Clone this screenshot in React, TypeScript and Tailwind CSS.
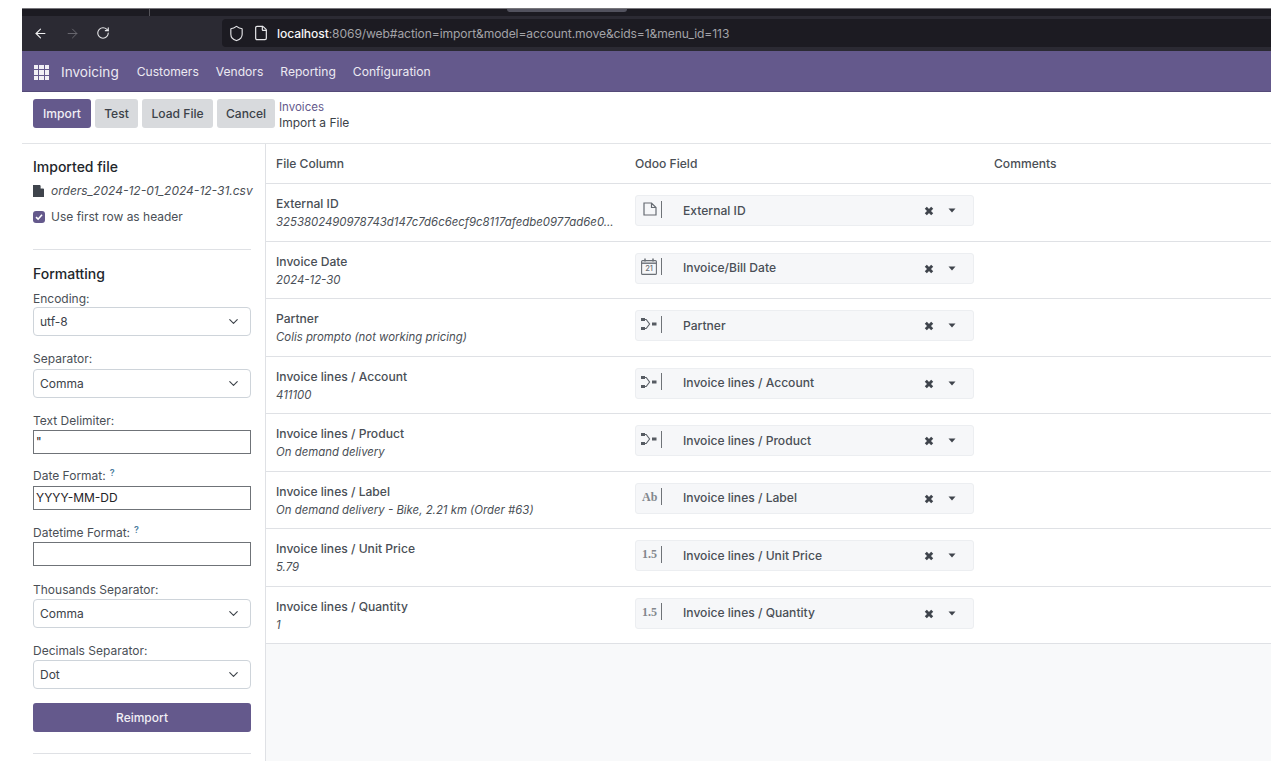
import React from "react";
import { ArrowLeft, ArrowRight, RotateCw, Shield, File, ChevronDown } from "lucide-react";

const font = { fontFamily: "Inter, 'Liberation Sans', sans-serif" };

function Chrome() {
  return (
    <div className="h-[43px] bg-[#1c1b22] border-t border-[#77767b] flex flex-col">
      <div className="h-[7px] bg-[#1c1b22] relative shrink-0">
        <div className="absolute left-[127px] top-0 w-px h-[7px] bg-[#55545a]" />
        <div className="absolute left-[485px] top-0 w-[120px] h-[3px] bg-[#52525e] rounded-b" />
      </div>
      <div className="h-[3px] bg-[#2b2a33] shrink-0" />
      <div className="flex-1 bg-[#2b2a33] flex items-center">
        <div className="flex items-center w-[200px] h-full pl-[11px]">
          <ArrowLeft size={15} strokeWidth={1.8} className="text-[#f0f0f2]" />
          <ArrowRight size={15} strokeWidth={1.5} className="text-[#6c6b72] ml-[17px]" />
          <RotateCw size={14} strokeWidth={1.9} className="text-[#e6e6e9] ml-[16px]" />
        </div>
        <div className="flex-1 h-[28px] bg-[#1c1b22] rounded-l flex items-center pl-[6px] text-[12.1px] tracking-[-0.1px]">
          <Shield size={17} strokeWidth={1.6} className="text-[#e6e6e9]" />
          <File size={16} strokeWidth={1.8} className="text-[#e6e6e9] ml-[8px]" />
          <span className="ml-[8px] mt-[2px] text-[#f4f4f5] font-medium">localhost</span>
          <span className="mt-[2px] text-[#a3a3a8]">:8069/web#action=import&amp;model=account.move&amp;cids=1&amp;menu_id=113</span>
        </div>
      </div>
      <div className="h-[4px] bg-[#2b2a33] shrink-0" />
    </div>
  );
}

function AppsIcon() {
  return (
    <div className="grid grid-cols-3 gap-px w-[15px] h-[15px]">
      {Array.from({ length: 9 }).map((_, i) => (
        <div key={i} className="bg-[#f1eff5]" />
      ))}
    </div>
  );
}

function Nav() {
  return (
    <div className="h-[41px] bg-[#64598c] border-b border-[#544a78] flex items-center text-[#ece9f2] text-[12.1px] pl-[12px] pt-[3px]">
      <AppsIcon />
      <span className="ml-[12px] text-[13.6px]">Invoicing</span>
      <span className="ml-[18px]">Customers</span>
      <span className="ml-[17px]">Vendors</span>
      <span className="ml-[17px]">Reporting</span>
      <span className="ml-[17px]">Configuration</span>
    </div>
  );
}

function Toolbar() {
  const btn = "h-[29px] rounded-[3px] text-[12.1px] font-medium flex items-center justify-center pt-[2px]";
  const grey = "bg-[#d8dadd] text-[#3c4249]";
  return (
    <div className="h-[52px] border-b border-[#e2e4e7] bg-white flex pl-[11px] pt-[7px]">
      <button className={`${btn} w-[58px] bg-[#64598c] text-[#f1eff5]`}>Import</button>
      <button className={`${btn} ${grey} w-[43px] ml-[4px]`}>Test</button>
      <button className={`${btn} ${grey} w-[71px] ml-[4px]`}>Load File</button>
      <button className={`${btn} ${grey} w-[58px] ml-[4px]`}>Cancel</button>
      <div className="ml-[4px] text-[12px] leading-[15px] pt-[0.5px]">
        <div className="text-[#64598c] text-[11.5px]">Invoices</div>
        <div className="text-[#3c4249]">Import a File</div>
      </div>
    </div>
  );
}

function FieldLabel({ children, help }: { children: React.ReactNode; help?: boolean }) {
  return (
    <div className="text-[12px] leading-[15px] text-[#4a4f56]">
      {children}
      {help && <sup className="text-[#4c7ea0] text-[9px] ml-[4px] font-semibold">?</sup>}
    </div>
  );
}

function SelectBox({ value, top }: { value: string; top: string }) {
  return (
    <div className={`${top} h-[29px] w-full border border-[#ced4da] rounded-[4px] bg-white flex items-center justify-between pl-[6px] pr-[9px] text-[12px] text-[#3c4249]`}>
      <span>{value}</span>
      <ChevronDown size={15} strokeWidth={1.8} className="text-[#3c4249]" />
    </div>
  );
}

function TextBox({ value, top }: { value: string; top: string }) {
  return (
    <div className={`${top} h-[24px] w-full border border-[#6f7378] bg-white flex items-center pl-[2px] text-[12px] text-[#1f2328]`}>
      {value}
    </div>
  );
}

function Sidebar() {
  return (
    <aside className="w-[244px] shrink-0 border-r border-[#dfe1e5] bg-white pl-[11px] pr-[14px] h-full overflow-hidden">
      <h2 className="text-[14px] leading-[18px] font-medium text-[#22262b] mt-[14px]">Imported file</h2>
      <div className="flex items-center mt-[6px] h-[18px] text-[12px] text-[#4a4f56] italic whitespace-nowrap">
        <svg width="11" height="12" viewBox="0 0 11 12" className="mr-[7px] shrink-0">
          <path d="M0 0h7l4 4v8H0z" fill="#3f444c" />
          <path d="M7.6 0 11 3.4H7.6z" fill="#ffffff" />
        </svg>
        <span>orders_2024-12-01_2024-12-31.csv</span>
      </div>
      <div className="flex items-center mt-[8px] h-[18px] text-[12px] text-[#4a4f56]">
        <div className="w-[12px] h-[12px] rounded-[3px] bg-[#64598c] flex items-center justify-center mr-[6px]">
          <svg width="8" height="8" viewBox="0 0 8 8">
            <path d="M1 4.2 3.1 6.2 7 1.8" fill="none" stroke="#fff" strokeWidth="1.6" />
          </svg>
        </div>
        Use first row as header
      </div>
      <div className="border-t border-[#dfe1e5] mt-[23px]" />
      <h2 className="text-[14px] leading-[18px] font-medium text-[#22262b] mt-[15px]">Formatting</h2>

      <div className="mt-[8px]"><FieldLabel>Encoding:</FieldLabel><SelectBox value="utf-8" top="mt-[1px]" /></div>
      <div className="mt-[15px]"><FieldLabel>Separator:</FieldLabel><SelectBox value="Comma" top="mt-[3px]" /></div>
      <div className="mt-[15px]"><FieldLabel>Text Delimiter:</FieldLabel><TextBox value={'"'} top="mt-[2px]" /></div>
      <div className="mt-[14px]"><FieldLabel help>Date Format:</FieldLabel><TextBox value="YYYY-MM-DD" top="mt-[3px]" /></div>
      <div className="mt-[15px]"><FieldLabel help>Datetime Format:</FieldLabel><TextBox value="" top="mt-[2px]" /></div>
      <div className="mt-[16px]"><FieldLabel>Thousands Separator:</FieldLabel><SelectBox value="Comma" top="mt-[2px]" /></div>
      <div className="mt-[15px]"><FieldLabel>Decimals Separator:</FieldLabel><SelectBox value="Dot" top="mt-[2px]" /></div>
      <button className="mt-[14px] w-full h-[29px] rounded-[3px] bg-[#64598c] text-[#f1eff5] text-[12px] font-medium">Reimport</button>
      <div className="border-t border-[#dfe1e5] mt-[21px]" />
    </aside>
  );
}

type Kind = "file" | "cal" | "rel" | "ab" | "num";

function TypeIcon({ kind }: { kind: Kind }) {
  if (kind === "file")
    return (
      <svg width="14" height="14" viewBox="0 0 14 14" className="block ml-[2px] shrink-0">
        <path d="M1 1h7.5l4.5 4.5V13H1zM8.5 1v4.5H13" fill="none" stroke="#666b72" strokeWidth="1.2" />
      </svg>
    );
  if (kind === "cal")
    return (
      <div className="relative w-[16px] h-[17px] shrink-0">
        <svg width="16" height="17" viewBox="0 0 16 17" className="block">
          <rect x="0.6" y="2.6" width="14.8" height="13.8" rx="1" fill="none" stroke="#6a6f76" strokeWidth="1.1" />
          <path d="M0.6 5.2h14.8" stroke="#6a6f76" strokeWidth="1.4" />
          <path d="M4 0.6v3M12 0.6v3" stroke="#6a6f76" strokeWidth="1.5" />
        </svg>
        <span className="absolute left-0 right-0 top-[6px] text-center text-[7.5px] leading-[10px] text-[#6a6f76]">21</span>
      </div>
    );
  if (kind === "rel")
    return (
      <svg width="16" height="12" viewBox="0 0 16 12" className="block shrink-0">
        <path d="M3 1.5h2.2L8.6 6l-3.4 4.5H3" fill="none" stroke="#5c6168" strokeWidth="1.1" />
        <rect x="0" y="0" width="4" height="3" fill="#565b62" />
        <rect x="0" y="9" width="4" height="3" fill="#565b62" />
        <rect x="11" y="4.5" width="4.5" height="3" fill="#565b62" />
      </svg>
    );
  return (
    <span className="text-[12px] leading-[14px] font-bold text-[#83878d] ml-[1px]" style={{ fontFamily: "'Liberation Serif', serif" }}>
      {kind === "ab" ? "Ab" : "1.5"}
    </span>
  );
}

function FieldSelect({ kind, label }: { kind: Kind; label: string }) {
  return (
    <div className="w-[339px] h-[31px] mb-[3px] rounded-[3px] bg-[#f6f7f9] border border-[#eceef1] flex items-center text-[12.1px] font-medium text-[#4a4f56] relative">
      <div className="w-[21px] h-[17px] ml-[5px] mr-[21px] border-r border-[#6f7378] flex items-center mt-[-3px] shrink-0">
        <TypeIcon kind={kind} />
      </div>
      <span>{label}</span>
      <svg width="10" height="10" viewBox="0 0 10 10" className="absolute left-[288px] top-[10px]">
        <path d="M1.8 1.8 8.2 8.2M8.2 1.8 1.8 8.2" stroke="#3f444c" strokeWidth="2.9" />
      </svg>
      <svg width="8" height="5" viewBox="0 0 8 5" className="absolute left-[312px] top-[12px]">
        <path d="M0.5 0.5h7L4 4.5z" fill="#3f444c" />
      </svg>
    </div>
  );
}

const rows: { col: string; sample: string; kind: Kind; field: string }[] = [
  { col: "External ID", sample: "3253802490978743d147c7d6c6ecf9c8117afedbe0977ad6e0...", kind: "file", field: "External ID" },
  { col: "Invoice Date", sample: "2024-12-30", kind: "cal", field: "Invoice/Bill Date" },
  { col: "Partner", sample: "Colis prompto (not working pricing)", kind: "rel", field: "Partner" },
  { col: "Invoice lines / Account", sample: "411100", kind: "rel", field: "Invoice lines / Account" },
  { col: "Invoice lines / Product", sample: "On demand delivery", kind: "rel", field: "Invoice lines / Product" },
  { col: "Invoice lines / Label", sample: "On demand delivery - Bike, 2.21 km (Order #63)", kind: "ab", field: "Invoice lines / Label" },
  { col: "Invoice lines / Unit Price", sample: "5.79", kind: "num", field: "Invoice lines / Unit Price" },
  { col: "Invoice lines / Quantity", sample: "1", kind: "num", field: "Invoice lines / Quantity" },
];

function MappingTable() {
  return (
    <main className="flex-1 bg-[#f8f9fa] h-full overflow-hidden">
      <div className="bg-white h-[40px] border-b border-[#dfe1e5] flex items-center text-[12.1px] font-medium text-[#4a4f56] pl-[10px] pt-[2px]">
        <div className="w-[359px]">File Column</div>
        <div className="w-[359px]">Odoo Field</div>
        <div>Comments</div>
      </div>
      {rows.map((r) => (
        <div key={r.col} className="bg-white h-[57.5px] border-b border-[#dfe1e5] flex items-center pl-[10px]">
          <div className="w-[359px] pt-[2px] whitespace-nowrap">
            <div className="text-[12.1px] leading-[18px] font-medium text-[#4a4f56]">{r.col}</div>
            <div className="text-[11.4px] leading-[18px] italic text-[#4a4f56]">{r.sample}</div>
          </div>
          <FieldSelect kind={r.kind} label={r.field} />
        </div>
      ))}
    </main>
  );
}

export default function App() {
  return (
    <div className="w-[1285px] h-[761px] bg-white overflow-hidden pt-[8px] pl-[22px] pr-[14px]" style={font}>
      <Chrome />
      <Nav />
      <Toolbar />
      <div className="flex h-[617px]">
        <Sidebar />
        <MappingTable />
      </div>
    </div>
  );
}
